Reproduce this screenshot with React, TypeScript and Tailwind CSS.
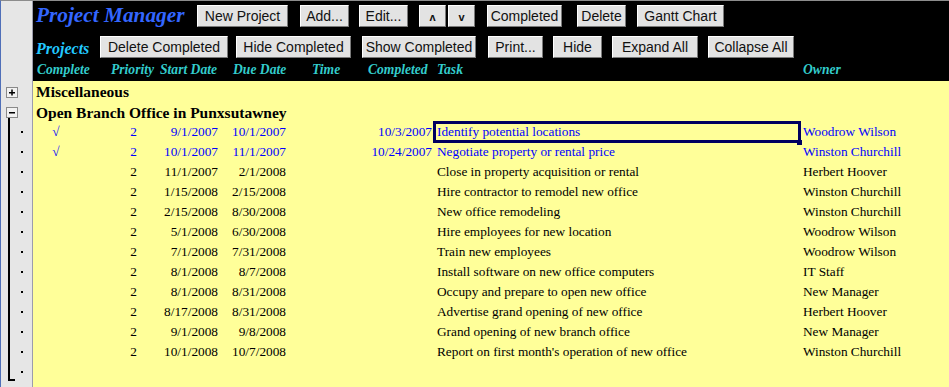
import React from 'react';

type Task = {
  done: boolean;
  priority: string;
  start: string;
  due: string;
  completed: string;
  task: string;
  owner: string;
};

const tasks: Task[] = [
  { done: true, priority: '2', start: '9/1/2007', due: '10/1/2007', completed: '10/3/2007', task: 'Identify potential locations', owner: 'Woodrow Wilson' },
  { done: true, priority: '2', start: '10/1/2007', due: '11/1/2007', completed: '10/24/2007', task: 'Negotiate property or rental price', owner: 'Winston Churchill' },
  { done: false, priority: '2', start: '11/1/2007', due: '2/1/2008', completed: '', task: 'Close in property acquisition or rental', owner: 'Herbert Hoover' },
  { done: false, priority: '2', start: '1/15/2008', due: '2/15/2008', completed: '', task: 'Hire contractor to remodel new office', owner: 'Winston Churchill' },
  { done: false, priority: '2', start: '2/15/2008', due: '8/30/2008', completed: '', task: 'New office remodeling', owner: 'Winston Churchill' },
  { done: false, priority: '2', start: '5/1/2008', due: '6/30/2008', completed: '', task: 'Hire employees for new location', owner: 'Woodrow Wilson' },
  { done: false, priority: '2', start: '7/1/2008', due: '7/31/2008', completed: '', task: 'Train new employees', owner: 'Woodrow Wilson' },
  { done: false, priority: '2', start: '8/1/2008', due: '8/7/2008', completed: '', task: 'Install software on new office computers', owner: 'IT Staff' },
  { done: false, priority: '2', start: '8/1/2008', due: '8/31/2008', completed: '', task: 'Occupy and prepare to open new office', owner: 'New Manager' },
  { done: false, priority: '2', start: '8/17/2008', due: '8/31/2008', completed: '', task: 'Advertise grand opening of new office', owner: 'Herbert Hoover' },
  { done: false, priority: '2', start: '9/1/2008', due: '9/8/2008', completed: '', task: 'Grand opening of new branch office', owner: 'New Manager' },
  { done: false, priority: '2', start: '10/1/2008', due: '10/7/2008', completed: '', task: "Report on first month's operation of new office", owner: 'Winston Churchill' },
];

type GutterKind = 'none' | 'plus' | 'minus' | 'item' | 'last';

const Gutter: React.FC<{ kind: GutterKind; h: number }> = ({ kind, h }) => (
  <div className="w-[32px] shrink-0 bg-[#e6e6e6] border-r border-[#9c9cab]" style={{ height: h }}>
    {kind !== 'none' && (
      <svg width="32" height={h} className="block">
        {(kind === 'plus' || kind === 'minus') && (
          <>
            <rect x="5.5" y="6.5" width="11" height="10" fill="#f2f2f2" stroke="#8a8a8a" />
            <rect x="8" y="11" width="6" height="1.5" fill="#000" />
            {kind === 'plus' && <rect x="10.25" y="8.5" width="1.5" height="6" fill="#000" />}
            {kind === 'minus' && <rect x="7" y="17" width="2" height={h - 17} fill="#000" />}
          </>
        )}
        {kind === 'item' && <rect x="7" y="0" width="2" height={h} fill="#000" />}
        {kind === 'last' && (
          <>
            <rect x="7" y="0" width="2" height={h} fill="#000" />
            <rect x="7" y={h - 2} width="7" height="2" fill="#000" />
          </>
        )}
        {(kind === 'item' || kind === 'last') && <rect x="20" y={h / 2} width="2" height="2" fill="#000" />}
      </svg>
    )}
  </div>
);

const Btn: React.FC<{ w: number; ml?: number; children: React.ReactNode }> = ({ w, ml = 0, children }) => (
  <button
    className="h-[22px] shrink-0 bg-[#e3e3e3] border border-t-white border-l-white border-r-[#7a7a7a] border-b-[#7a7a7a] text-[14px] leading-none text-[#111] font-['Liberation_Sans',Arial,sans-serif] flex items-center justify-center"
    style={{ width: w, marginLeft: ml }}
  >
    {children}
  </button>
);

const labels: [string, number][] = [
  ['Complete', 74],
  ['Priority', 49],
  ['Start Date', 73],
  ['Due Date', 79],
  ['Time', 56],
  ['Completed', 69],
  ['Task', 366],
  ['Owner', 100],
];

export default function App() {
  return (
    <div className="w-[949px] h-[387px] overflow-hidden flex flex-col border-t border-[#8c8c8c] border-l border-l-[#4f6fb8] font-['Liberation_Serif','Times_New_Roman',serif]">
      {/* header */}
      <div className="flex shrink-0">
        <Gutter kind="none" h={80} />
        <div className="flex-1 h-[80px] bg-black">
          <div className="flex items-center h-[22px] mt-[4px]">
            <div className="w-[164px] pl-[3px] text-[21.3px] font-bold italic text-[#3366ff] leading-none">
              Project Manager
            </div>
            <Btn w={91}>New Project</Btn>
            <Btn w={49} ml={12}>Add...</Btn>
            <Btn w={49} ml={10}>Edit...</Btn>
            <Btn w={27} ml={11}>
              <span className="text-[11px] font-bold pt-[3px]">ʌ</span>
            </Btn>
            <Btn w={27} ml={2}>
              <span className="text-[11px] font-bold pt-[3px]">v</span>
            </Btn>
            <Btn w={75} ml={12}>Completed</Btn>
            <Btn w={49} ml={15}>Delete</Btn>
            <Btn w={87} ml={11}>Gantt Chart</Btn>
          </div>
          <div className="flex items-center h-[22px] mt-[9px]">
            <div className="w-[67px] pl-[3px] pt-[4px] text-[16px] font-bold italic text-[#22c8ff] leading-none">
              Projects
            </div>
            <Btn w={128}>Delete Completed</Btn>
            <Btn w={115} ml={8}>Hide Completed</Btn>
            <Btn w={114} ml={11}>Show Completed</Btn>
            <Btn w={55} ml={12}>Print...</Btn>
            <Btn w={49} ml={10}>Hide</Btn>
            <Btn w={86} ml={10}>Expand All</Btn>
            <Btn w={86} ml={10}>Collapse All</Btn>
          </div>
          <div className="flex items-center h-[20px] pt-[3px] pl-[4px] text-[13.6px] font-bold italic text-[#33cccc] leading-none">
            {labels.map(([t, w]) => (
              <div key={t} className="shrink-0" style={{ width: w }}>
                {t}
              </div>
            ))}
          </div>
        </div>
      </div>

      {/* groups */}
      <div className="flex shrink-0">
        <Gutter kind="plus" h={20} />
        <div className="flex-1 h-[20px] bg-[#ffff99] pl-[3px] pt-[2px] flex items-center text-[15.5px] font-bold text-black">
          Miscellaneous
        </div>
      </div>
      <div className="flex shrink-0">
        <Gutter kind="minus" h={20} />
        <div className="flex-1 h-[20px] bg-[#ffff99] pl-[3px] pt-[3px] flex items-center text-[15.5px] font-bold text-black">
          Open Branch Office in Punxsutawney
        </div>
      </div>

      {tasks.map((t, i) => {
        const color = t.done ? 'text-[#0000ff]' : 'text-black';
        return (
          <div key={i} className="flex shrink-0">
            <Gutter kind="item" h={20} />
            <div className={`flex-1 h-[20px] pt-[2px] bg-[#ffff99] flex items-center text-[13.3px] leading-none ${color}`}>
              <div className="w-[46px] shrink-0 text-center text-[#0000ff] italic">{t.done ? '√' : ''}</div>
              <div className="w-[60px] shrink-0 text-right pr-[2px]">{t.priority}</div>
              <div className="w-[81px] shrink-0 text-right pr-[2px]">{t.start}</div>
              <div className="w-[68px] shrink-0 text-right pr-[2px]">{t.due}</div>
              <div className="w-[71px] shrink-0" />
              <div className="w-[74px] shrink-0 text-right pr-[1px]">{t.completed}</div>
              <div className="w-[368px] shrink-0 pl-[4px] relative h-full flex items-center">
                {t.task}
                {i === 0 && (
                  <>
                    <div className="absolute left-0 top-[-2px] w-[368px] h-[22px] border-[3px] border-[#000060] z-10" />
                    <div className="absolute left-[364px] top-[17px] w-[5px] h-[5px] bg-[#000060] z-10" />
                  </>
                )}
              </div>
              <div className="pl-[2px] whitespace-nowrap">{t.owner}</div>
            </div>
          </div>
        );
      })}

      <div className="flex shrink-0">
        <Gutter kind="last" h={20} />
        <div className="flex-1 h-[20px] bg-[#ffff99]" />
      </div>
      <div className="flex flex-1">
        <div className="w-[32px] shrink-0 bg-[#e6e6e6] border-r border-[#9c9cab]" />
        <div className="flex-1 bg-[#ffff99]" />
      </div>
    </div>
  );
}
